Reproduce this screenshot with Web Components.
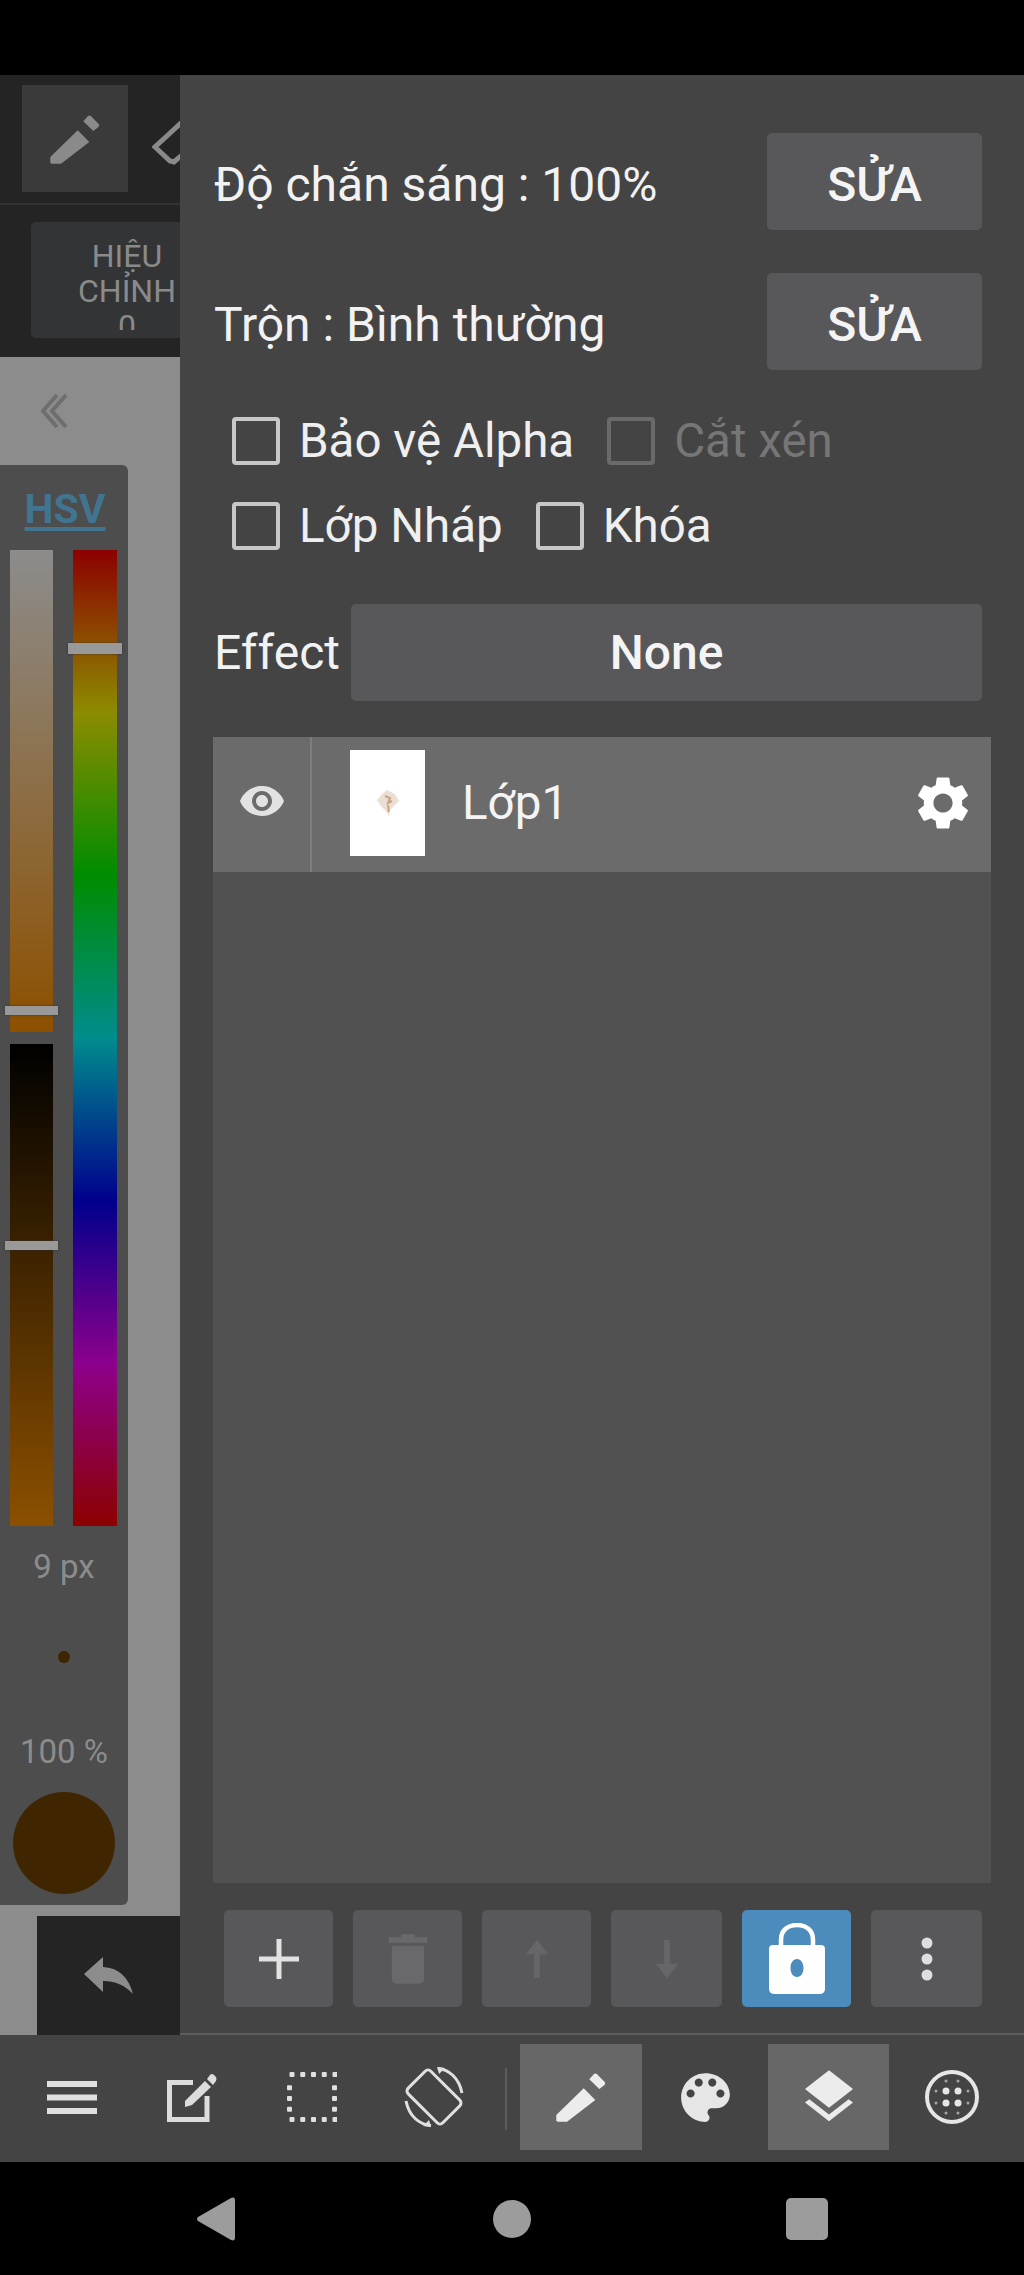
<!DOCTYPE html>
<html lang="vi">
<head>
<meta charset="utf-8">
<title>Layer panel</title>
<style>
  html, body { margin: 0; padding: 0; background: #000; }
  body { font-family: Roboto, "Liberation Sans", sans-serif; width: 1024px; height: 2275px; overflow: hidden; }
</style>
</head>
<body>
<paint-app></paint-app>

<script>
class BaseEl extends HTMLElement {
    constructor() {
        super();
        this.attachShadow({ mode: "open" });
    }
    connectedCallback() {
        this.render();
    }
    render() {
        const template = document.createElement("template");
        template.innerHTML = `<style>${this.getStyles()}</style>${this.getTemplate()}`;
        this.shadowRoot.innerHTML = "";
        this.shadowRoot.appendChild(template.content.cloneNode(true));
    }
}

const PENCIL = `<path d="M.3 43 27.7 16.3 39.3 28 11 49.7H1.5L.3 48.500Z"/><path d="M33.300 7.300 37.500 2.500Q39.300 .6 41 2.200L48.500 9.700Q50 11.300 48.500 13L43.300 17Z"/>`;

class FlatButton extends BaseEl {
    getStyles() {
        return `
        :host { display: block; }
        div {
            height: 100%;
            display: flex;
            align-items: center;
            justify-content: center;
            background: var(--btn-bg, #58585b);
            border-radius: 5px;
            color: #f4f4f4;
            font-size: 48px;
            font-weight: 500;
            box-sizing: border-box;
            padding-top: var(--btn-drop, 0);
        }`;
    }
    getTemplate() {
        return `<div><slot></slot></div>`;
    }
}
customElements.define("flat-button", FlatButton);

class CheckItem extends BaseEl {
    getStyles() {
        const off = this.hasAttribute("disabled");
        return `
        :host { display: flex; align-items: center; gap: 19px; color: ${off ? "#767676" : "#efefef"}; font-size: 47.500px; }
        i { width: 40px; height: 40px; border: 4px solid ${off ? "#6a6a6a" : "#c8c8c8"}; border-radius: 4px; display: block; }`;
    }
    getTemplate() {
        return `<i></i><span><slot></slot></span>`;
    }
}
customElements.define("check-item", CheckItem);

class LayerRow extends BaseEl {
    getStyles() {
        return `
        :host { display: flex; height: 135px; background: #6b6b6b; color: #f4f4f4; font-size: 47.500px; align-items: center; }
        .eye { width: 97px; height: 100%; border-right: 2px solid #7d7d7d; display: flex; align-items: center; justify-content: center; box-sizing: content-box; }
        .thumb { width: 75px; height: 106px; margin-left: 38px; background: #fff; display: flex; align-items: center; justify-content: center; margin-top: -4px; }
        .name { margin-left: 37px; flex: 1; margin-top: -4px; }
        .gear { margin-right: 16px; margin-top: -4px; display: block; }
        .eye svg { margin-top: -8px; }`;
    }
    getTemplate() {
        return `
        <div class="eye"><svg width="48" height="48" viewBox="0 0 24 24" fill="#e2e2e2"><path d="M12 4.500C7 4.500 2.730 7.610 1 12c1.730 4.390 6 7.500 11 7.500s9.270-3.110 11-7.500c-1.730-4.390-6-7.500-11-7.500zM12 17c-2.760 0-5-2.240-5-5s2.240-5 5-5 5 2.240 5 5-2.240 5-5 5zm0-8c-1.660 0-3 1.340-3 3s1.340 3 3 3 3-1.340 3-3-1.340-3-3-3z"/></svg></div>
        <div class="thumb"><svg width="24" height="28" viewBox="0 0 24 28"><path d="M11 1 19 5 23 12 18 17 14 21 13 27 10 22 5 17 1 11 6 5Z" fill="#eadfd2"/><path d="M9 7 14 9 12 14 16 12M12 16 13 23" stroke="#c9a583" stroke-width="2" fill="none"/></svg></div>
        <div class="name"><slot></slot></div>
        <svg class="gear" width="64" height="64" viewBox="0 0 24 24" fill="#fff"><path d="M19.140 12.940c.04-.3.06-.61.06-.94 0-.32-.02-.64-.07-.94l2.030-1.580c.18-.14.23-.41.12-.61l-1.920-3.320c-.12-.22-.37-.29-.59-.22l-2.390.96c-.5-.38-1.030-.7-1.620-.94l-.36-2.540c-.04-.24-.24-.41-.48-.41h-3.840c-.24 0-.43.17-.47.41l-.36 2.540c-.59.24-1.130.57-1.620.94l-2.390-.96c-.22-.08-.47 0-.59.22L2.740 8.870c-.12.21-.08.47.12.61l2.030 1.580c-.05.3-.09.63-.09.94s.02.64.07.94l-2.030 1.580c-.18.14-.23.41-.12.61l1.920 3.320c.12.22.37.29.59.22l2.390-.96c.5.38 1.030.7 1.620.94l.36 2.540c.05.24.24.41.48.41h3.840c.24 0 .44-.17.47-.41l.36-2.540c.59-.24 1.130-.56 1.620-.94l2.390.96c.22.08.47 0 .59-.22l1.920-3.320c.12-.22.07-.47-.12-.61l-2.010-1.580zM12 15.600c-1.980 0-3.600-1.620-3.600-3.600s1.620-3.600 3.600-3.600 3.600 1.620 3.600 3.600-1.620 3.600-3.600 3.600z"/></svg>`;
    }
}
customElements.define("layer-row", LayerRow);

class ColorSliders extends BaseEl {
    getStyles() {
        return `
        :host { display: block; width: 128px; height: 1440px; background: #4d4d4d; border-radius: 0 6px 6px 0; color: #8c8c8c; text-align: center; box-sizing: border-box; }
        .tab { height: 85px; display: flex; justify-content: center; align-items: flex-end; padding-left: 2px; box-sizing: border-box; }
        .tab span { color: #41748f; font-size: 41px; font-weight: 700; text-decoration: underline; text-underline-offset: 4px; line-height: 43px; margin-bottom: 19px; }
        .bars { display: flex; gap: 20px; padding-left: 10px; }
        .col { display: flex; flex-direction: column; gap: 12px; width: 43px; }
        .bar { position: relative; width: 43px; }
        .sat { height: 482px; background: linear-gradient(#8c8c8c, #8c5000); }
        .val { height: 482px; background: linear-gradient(#000, #8c5000); }
        .hue { height: 976px; width: 44px; background: linear-gradient(#8c0000, #8c8c00, #008c00, #008c8c, #00008c, #8c008c, #8c0000); }
        .knob { position: absolute; left: -5px; right: -5px; height: 9px; background: #999; box-shadow: 0 0 2px #333; }
        .size { font-size: 33px; line-height: 36px; margin-top: 23px; }
        .dot { width: 12px; height: 12px; border-radius: 50%; background: #3d2500; margin: 66px auto 0; }
        .op { font-size: 33px; line-height: 36px; margin-top: 71px; }
        .swatch { width: 102px; height: 102px; border-radius: 50%; background: #3f2600; margin: 22px 0 0 13px; }`;
    }
    getTemplate() {
        return `
        <div class="tab"><span>HSV</span></div>
        <div class="bars">
            <div class="col">
                <div class="bar sat"><div class="knob" style="top:456px"></div></div>
                <div class="bar val"><div class="knob" style="top:197px"></div></div>
            </div>
            <div class="bar hue"><div class="knob" style="top:93px;height:11px"></div></div>
        </div>
        <div class="size">9 px</div>
        <div class="dot"></div>
        <div class="op">100 %</div>
        <div class="swatch"></div>`;
    }
}
customElements.define("color-sliders", ColorSliders);

class CanvasSide extends BaseEl {
    getStyles() {
        return `
        :host { display: flex; flex-direction: column; width: 180px; overflow: hidden; background: #8c8c8c; }
        .tools { height: 130px; background: #242424; border-bottom: 2px solid #333; box-sizing: border-box; display: flex; padding-top: 10px; }
        .sel { width: 106px; height: 107px; margin-left: 22px; background: #3a3a3a; display: flex; align-items: center; justify-content: center; flex: none; }
        .eraser { margin: 36px 0 0 24px; flex: none; }
        .modes { height: 152px; background: #242424; padding: 17px 0 0 31px; box-sizing: border-box; }
        .btn { width: 170px; height: 116px; background: #333436; border-radius: 5px; padding-top: 17px; box-sizing: border-box; }
        .lines { height: 91px; overflow: hidden; color: #8a8a8a; font-size: 32px; line-height: 35px; }
        .lines span { display: block; width: 192px; text-align: center; }
        .area { flex: 1; display: flex; flex-direction: column; }
        .back { margin: 36px 0 0 40px; display: block; height: 36px; }
        color-sliders { margin-top: 36px; flex: none; }
        .undo { margin: 11px 0 0 37px; height: 119px; background: #242424; display: flex; align-items: center; justify-content: center; flex: none; }`;
    }
    getTemplate() {
        return `
        <div class="tools">
            <div class="sel"><svg width="50" height="50" viewBox="0 0 50 50" fill="#8a8a8a">${PENCIL}</svg></div>
            <svg class="eraser" width="30" height="44" viewBox="0 0 30 44" fill="none" stroke="#8a8a8a" stroke-width="5"><path d="M30 1 16 14 3 26 18 40 22 41 30 34"/></svg>
        </div>
        <div class="modes"><div class="btn"><div class="lines"><span>HIỆU</span><span>CHỈNH</span><span>0</span></div></div></div>
        <div class="area">
            <svg class="back" width="28" height="36" viewBox="0 0 28 36" fill="none" stroke="#6e6e6e" stroke-width="4"><path d="M17 2 3 18 17 34M26 2 12 18 26 34"/></svg>
            <color-sliders></color-sliders>
            <div class="undo"><svg width="50" height="38" viewBox="0 0 50 38" fill="#8c8c8c"><path d="M0 17 19 0V10Q42 11 49 37 37 24 19 24V35Z"/></svg></div>
        </div>`;
    }
}
customElements.define("canvas-side", CanvasSide);

class LayerPanel extends BaseEl {
    getStyles() {
        return `
        :host { display: block; background: #444; color: #f2f2f2; font-size: 48px; border-bottom: 2px solid #5c5c5c; box-sizing: border-box; padding-top: 58px; }
        .row { display: flex; align-items: center; justify-content: space-between; height: 97px; padding: 0 42px 0 34px; }
        .row + .row { margin-top: 43px; }
        .row span.low { padding-top: 5px; }
        .row flat-button { width: 215px; height: 100%; --btn-drop: 5px; }
        .checks { display: flex; align-items: center; height: 48px; padding-left: 52px; }
        .c1 { margin-top: 47px; }
        .c2 { margin-top: 37px; }
        .row.fx { margin-top: 54px; }
        .fx flat-button { width: 631px; height: 100%; --btn-drop: 0; }
        .list { margin: 36px 33px 0 33px; height: 1146px; background: #515151; }
        .actions { margin: 27px 42px 0 44px; display: flex; gap: 20px; height: 97px; }
        .actions flat-button { width: 109px; }
        .actions flat-button.w { width: 111px; }
        .actions flat-button.on { --btn-bg: #4c8cbc; }
        svg { display: block; }`;
    }
    getTemplate() {
        return `
        <div class="row"><span class="low">Độ chắn sáng : 100%</span><flat-button>SỬA</flat-button></div>
        <div class="row"><span class="low">Trộn : Bình thường</span><flat-button>SỬA</flat-button></div>
        <div class="checks c1">
            <check-item>Bảo vệ Alpha</check-item>
            <check-item disabled style="margin-left:33px">Cắt xén</check-item>
        </div>
        <div class="checks c2">
            <check-item>Lớp Nháp</check-item>
            <check-item style="margin-left:33px">Khóa</check-item>
        </div>
        <div class="row fx"><span>Effect</span><flat-button>None</flat-button></div>
        <div class="list"><layer-row>Lớp1</layer-row></div>
        <div class="actions">
            <flat-button><svg width="40" height="40" viewBox="0 0 40 40" fill="#e2e2e2"><path d="M17.500 0h5v17.500H40v5H22.500V40h-5V22.500H0v-5h17.500Z"/></svg></flat-button>
            <flat-button><svg width="38" height="50" viewBox="0 0 40 52" fill="#69696b"><path d="M13 0h14v3h13v6H0V3h13ZM3 12h34v34q0 6-6 6H9q-6 0-6-6Z"/></svg></flat-button>
            <flat-button><svg width="24" height="38" viewBox="0 0 24 40" fill="#666668"><path d="M12 0 24 15H15V40H9V15H0Z"/></svg></flat-button>
            <flat-button class="w"><svg width="24" height="38" viewBox="0 0 24 40" fill="#666668"><path d="M9 0H15V25H24L12 40 0 25H9Z"/></svg></flat-button>
            <flat-button class="on"><svg width="56" height="72" viewBox="0 0 56 72" fill="#fff"><path fill-rule="evenodd" d="M4 22H52Q56 22 56 26V66Q56 71 50 71H6Q0 71 0 66V26Q0 22 4 22ZM28 36C24 36 21.500 40 21.500 45S24 54 28 54 34.500 50 34.500 45 32 36 28 36Z"/><path d="M12 25V17C12 7 19 2 28 2S44 7 44 17V25" fill="none" stroke="#fff" stroke-width="4.500"/></svg></flat-button>
            <flat-button class="w"><svg width="12" height="44" viewBox="0 0 12 44" fill="#dedede"><circle cx="6" cy="6" r="5.500"/><circle cx="6" cy="22" r="5.500"/><circle cx="6" cy="38" r="5.500"/></svg></flat-button>
        </div>`;
    }
}
customElements.define("layer-panel", LayerPanel);

class BottomBar extends BaseEl {
    getStyles() {
        return `
        :host { display: flex; height: 127px; background: #444; padding: 9px 0 0 12px; box-sizing: border-box; }
        div { height: 106px; width: 120px; display: flex; align-items: center; justify-content: center; flex: none; }
        .sel { background: #676767; width: 122px; }
        hr { width: 2px; height: 62px; background: #5d5d5d; border: 0; margin: 24px 13px 0 13px; flex: none; }
        svg { display: block; }`;
    }
    getTemplate() {
        let dots = "";
        [-6, 6].forEach(x => [-6, 6].forEach(y => {
            dots += `<circle cx="${27 + x}" cy="${27 + y}" r="3.500"/>`;
        }));
        [[-6, -16], [6, -16], [-6, 16], [6, 16], [-16, -6], [-16, 6], [16, -6], [16, 6]].forEach(p => {
            dots += `<circle cx="${27 + p[0]}" cy="${27 + p[1]}" r="1.500" opacity=".6"/>`;
        });
        let sel = "";
        for (let i = 0; i < 5; i++) {
            const p = 2.500 + i * 10.750;
            sel += `<rect x="${p}" y="0" width="5" height="5" rx="1"/><rect x="${p}" y="45" width="5" height="5" rx="1"/>`;
            if (i > 0 && i < 4) sel += `<rect x="0" y="${p}" width="5" height="5" rx="1"/><rect x="45" y="${p}" width="5" height="5" rx="1"/>`;
        }
        return `
        <div><svg width="50" height="33" viewBox="0 0 50 33" fill="#e0e0e0"><rect width="50" height="6"/><rect y="13.500" width="50" height="6"/><rect y="27" width="50" height="6"/></svg></div>
        <div><svg width="50" height="50" viewBox="0 0 50 50"><path d="M26 10.500H2.500V47.500H40V24" fill="none" stroke="#dcdcdc" stroke-width="5"/><path d="M18 29 38 9 44 15 25 33 18 35ZM40 7 43 3Q45 1 47 3L49 5Q50 7 49 9L46 13Z" fill="#dcdcdc"/></svg></div>
        <div><svg width="50" height="50" viewBox="0 0 50 50" fill="#e0e0e0">${sel}</svg></div>
        <div><svg style="margin-left:4px" width="62" height="62" viewBox="0 0 62 62" fill="none" stroke="#e0e0e0" stroke-width="3"><rect x="15" y="6.500" width="32" height="49" rx="4" transform="rotate(-45 31 31)"/><path d="M35 2.500C46 3.500 56 12 59 27M3 35C6 50 16 58.500 28 59.500"/><path d="M34 1 42 2 36 8ZM28 61 20 60 26 54Z" fill="#e0e0e0" stroke="none"/></svg></div>
        <hr>
        <div class="sel"><svg width="50" height="50" viewBox="0 0 50 50" fill="#ececec">${PENCIL}</svg></div>
        <div style="width:126px"><svg width="65" height="65" viewBox="0 0 24 24" fill="#e6e6e6"><path d="M12 3c-4.970 0-9 4.030-9 9s4.030 9 9 9c.83 0 1.500-.67 1.500-1.500 0-.39-.15-.74-.39-1.010-.23-.26-.38-.61-.38-.99 0-.83.67-1.500 1.500-1.500H16c2.760 0 5-2.240 5-5 0-4.420-4.030-8-9-8zm-5.500 9c-.83 0-1.500-.67-1.500-1.500S5.670 9 6.500 9 8 9.670 8 10.500 7.330 12 6.500 12zm3-4C8.670 8 8 7.330 8 6.500S8.670 5 9.500 5s1.500.67 1.500 1.500S10.330 8 9.500 8zm5 0c-.83 0-1.500-.67-1.500-1.500S13.670 5 14.500 5s1.500.67 1.500 1.500S15.330 8 14.500 8zm3 4c-.83 0-1.500-.67-1.500-1.500S16.670 9 17.500 9s1.500.67 1.500 1.500-.67 1.500-1.500 1.500z"/></svg></div>
        <div class="sel" style="width:121px"><svg width="64" height="64" viewBox="0 0 24 24" fill="#ececec"><path d="M11.990 18.540l-7.370-5.730L3 14.070l9 7 9-7-1.630-1.270-7.380 5.740zM12 16l7.360-5.730L21 9l-9-7-9 7 1.630 1.270L12 16z"/></svg></div>
        <div style="width:126px"><svg width="54" height="54" viewBox="0 0 54 54" fill="#e6e6e6"><circle cx="27" cy="27" r="25" fill="none" stroke="#e6e6e6" stroke-width="4"/>${dots}</svg></div>`;
    }
}
customElements.define("bottom-bar", BottomBar);

class NavBar extends BaseEl {
    getStyles() {
        return `
        :host { display: flex; height: 113px; background: #000; align-items: center; padding: 0 0 0 197px; box-sizing: border-box; }
        svg { display: block; flex: none; }`;
    }
    getTemplate() {
        return `
        <svg width="38" height="44" viewBox="0 0 38 44" fill="#9c9c9c"><path d="M1 20 34 1Q38 -.5 38 3V41Q38 44.500 34 43L1 24Q-1 22 1 20Z"/></svg>
        <svg width="38" height="38" viewBox="0 0 38 38" fill="#9c9c9c" style="margin-left:258px"><circle cx="19" cy="19" r="19"/></svg>
        <svg width="42" height="42" viewBox="0 0 42 42" fill="#9c9c9c" style="margin-left:255px"><rect width="42" height="42" rx="5"/></svg>`;
    }
}
customElements.define("nav-bar", NavBar);

class PaintApp extends BaseEl {
    getStyles() {
        return `
        :host { display: block; width: 1024px; height: 2275px; background: #000; }
        .status { height: 75px; background: #000; }
        .main { display: grid; grid-template-columns: 180px 844px; height: 1960px; }`;
    }
    getTemplate() {
        return `
        <div class="status"></div>
        <div class="main">
            <canvas-side></canvas-side>
            <layer-panel></layer-panel>
        </div>
        <bottom-bar></bottom-bar>
        <nav-bar></nav-bar>`;
    }
}
customElements.define("paint-app", PaintApp);
</script>
</body>
</html>
